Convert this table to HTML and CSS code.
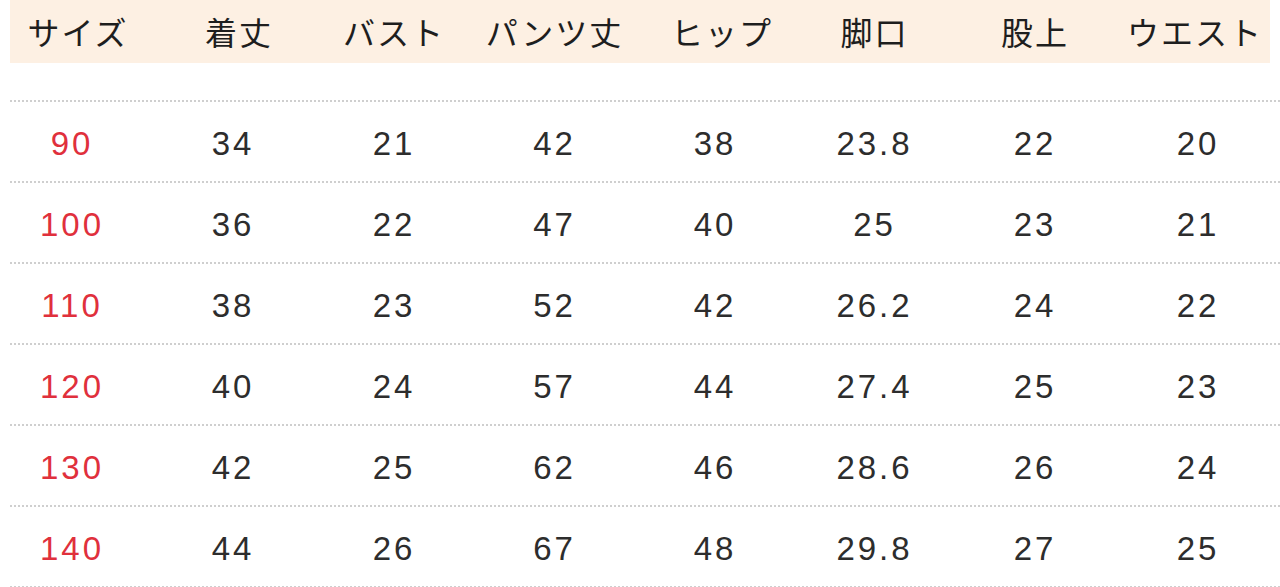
FILE: index.html
```html
<!DOCTYPE html>
<html lang="ja">
<head>
<meta charset="utf-8">
<title>サイズ表</title>
<link rel="stylesheet" href="styles.css">
</head>
<body>
<div class="sheet">
  <div class="head grid">
    <div class="h h1">サイズ</div>
    <div class="h h2">着丈</div>
    <div class="h">バスト</div>
    <div class="h">パンツ丈</div>
    <div class="h h5">ヒップ</div>
    <div class="h">脚口</div>
    <div class="h">股上</div>
    <div class="h h8">ウエスト</div>
  </div>
  <div class="rows">
    <div class="row grid"><div class="c size">90</div><div class="c">34</div><div class="c">21</div><div class="c">42</div><div class="c">38</div><div class="c">23.8</div><div class="c">22</div><div class="c">20</div></div>
    <div class="row grid"><div class="c size">100</div><div class="c">36</div><div class="c">22</div><div class="c">47</div><div class="c">40</div><div class="c">25</div><div class="c">23</div><div class="c">21</div></div>
    <div class="row grid"><div class="c size">110</div><div class="c">38</div><div class="c">23</div><div class="c">52</div><div class="c">42</div><div class="c">26.2</div><div class="c">24</div><div class="c">22</div></div>
    <div class="row grid"><div class="c size">120</div><div class="c">40</div><div class="c">24</div><div class="c">57</div><div class="c">44</div><div class="c">27.4</div><div class="c">25</div><div class="c">23</div></div>
    <div class="row grid"><div class="c size">130</div><div class="c">42</div><div class="c">25</div><div class="c">62</div><div class="c">46</div><div class="c">28.6</div><div class="c">26</div><div class="c">24</div></div>
    <div class="row grid"><div class="c size">140</div><div class="c">44</div><div class="c">26</div><div class="c">67</div><div class="c">48</div><div class="c">29.8</div><div class="c">27</div><div class="c">25</div></div>
  </div>
</div>
</body>
</html>
```
FILE: styles.css
```css
html, body {
  margin: 0;
  padding: 0;
  background: #ffffff;
}
body {
  width: 1280px;
  height: 587px;
  overflow: hidden;
  font-family: "Noto Sans CJK JP", "Noto Sans", sans-serif;
  color: #222222;
}
.sheet {
  padding-left: 10px;
}
.grid {
  display: grid;
  grid-template-columns: 142px 162px 160px 161px 160px 159px 162px 164px;
}
.head {
  width: 1260px;
  height: 63px;
  background: #fdf0e3;
  align-items: center;
}
.h {
  text-align: center;
  white-space: nowrap;
  font-size: 32px;
  letter-spacing: 2px;
  line-height: 1;
  padding-bottom: 1px;
  color: #1e1e1e;
}
.h1 {
  padding-right: 6px;
}
.h2 {
  padding-left: 12px;
}
.h5 {
  padding-left: 14px;
}
.h8 {
  padding-right: 6px;
}
.rows {
  margin-top: 37px;
  border-bottom: 2px dotted #cfcfcf;
}
.row {
  height: 79px;
  border-top: 2px dotted #cfcfcf;
  align-items: center;
}
.c {
  text-align: center;
  font-family: "Liberation Sans", Arial, sans-serif;
  font-size: 33px;
  letter-spacing: 3px;
  line-height: 1;
  padding-top: 4px;
  color: #2d2d2d;
}
.size {
  color: #e0303c;
  padding-right: 18px;
}
```
